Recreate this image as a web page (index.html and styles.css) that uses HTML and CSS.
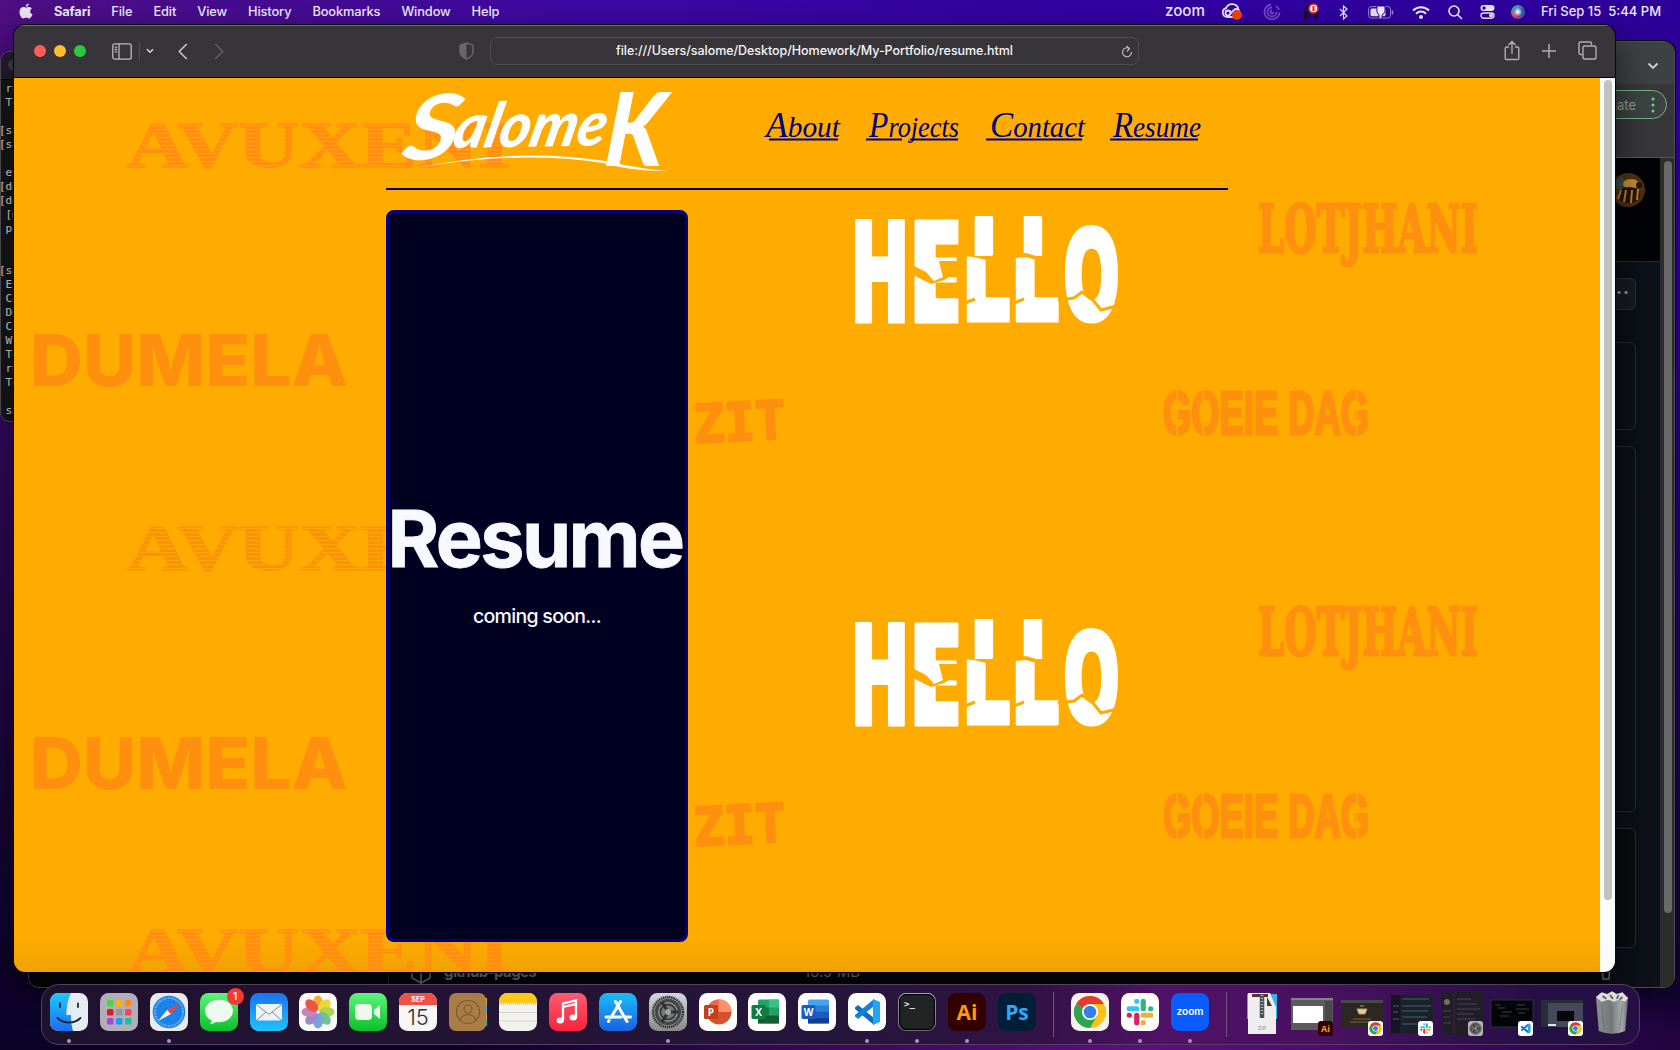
FILE: index.html
```html
<!DOCTYPE html>
<html lang="en">
<head>
<meta charset="utf-8">
<title>Desktop</title>
<link rel="stylesheet" href="styles.css">
</head>
<body>
<svg class="defs" aria-hidden="true">
  <defs>
    <linearGradient id="g-green" x2="0" y2="1"><stop stop-color="#5ff57a"/><stop offset="1" stop-color="#0bbf2a"/></linearGradient>
    <linearGradient id="g-blue" x2="0" y2="1"><stop stop-color="#1a72f2"/><stop offset="1" stop-color="#1fc3fb"/></linearGradient>
    <linearGradient id="g-store" x2="0" y2="1"><stop stop-color="#19bdf8"/><stop offset="1" stop-color="#1a62e4"/></linearGradient>
    <linearGradient id="g-red" x2="0" y2="1"><stop stop-color="#fb5c74"/><stop offset="1" stop-color="#fa233b"/></linearGradient>
    <linearGradient id="g-face" x2="0" y2="1"><stop stop-color="#1fc8fd"/><stop offset="1" stop-color="#1b6df2"/></linearGradient>
    <linearGradient id="g-gray" x2="0" y2="1"><stop stop-color="#cfd9e0"/><stop offset="1" stop-color="#8b8985"/></linearGradient>
    <linearGradient id="g-can"><stop stop-color="#8b8f92"/><stop offset=".45" stop-color="#75797c"/><stop offset=".8" stop-color="#a5a9ab"/><stop offset="1" stop-color="#6c7073"/></linearGradient>
    <pattern id="hatch" width="8" height="4" patternUnits="userSpaceOnUse"><rect width="8" height="3" fill="#ff900f"/></pattern>
    <clipPath id="upper"><path d="M930 120h130v54l-6-1-10 5h-22l-10-3-14 2-11-4-10 5h-22l-25-2z"/></clipPath>
    <clipPath id="lower"><path d="M930 177l30 2 12 3 20-1 20-2 10 3 20-1 20 0v80H930z"/></clipPath>
    <symbol id="chrome" viewBox="0 0 34 34">
      <circle cx="17" cy="17" r="16" fill="#fbc116"/>
      <path d="M17 17 3.1 9A16 16 0 0 1 30.9 9z" fill="#e33b2e"/>
      <path d="M17 17 3.1 9A16 16 0 0 0 17 33l7-12z" fill="#2da44e"/>
      <path d="M17 9h13.9A16 16 0 0 1 17 33l7-12z" fill="#fbc116"/>
      <circle cx="17" cy="17" r="8" fill="#fff"/><circle cx="17" cy="17" r="6.3" fill="#3380ec"/>
    </symbol>
    <symbol id="slack" viewBox="0 0 26 26">
      <g stroke-width="4.8" stroke-linecap="round" fill="none">
        <path d="M10 3v.1M3 10h7" stroke="#36c5f0"/><path d="M16 3v7M23 10h-.1" stroke="#2eb67d"/>
        <path d="M16 16h7M16 23v-.1" stroke="#ecb22e"/><path d="M10 16v7M3 16h.1" stroke="#e01e5a"/>
      </g>
    </symbol>
    <symbol id="code" viewBox="0 0 28 28">
      <path d="M2 9.5 5 7l16 13v7L2 11z" fill="#0b6fc0"/><path d="M2 18.5 5 21 21 8V1L2 17z" fill="#1482d4"/>
      <path d="M20 1l7 3v20l-7 3z" fill="#25a4ef"/>
    </symbol>
    <symbol id="gear" viewBox="0 0 34 34">
      <circle cx="17" cy="17" r="15" fill="#8c8d8c" stroke="#343536" stroke-width="2.5" stroke-dasharray="1.4 .7"/>
      <circle cx="17" cy="17" r="11.5" fill="none" stroke="#444546" stroke-width="3"/>
      <circle cx="17" cy="17" r="7.6" fill="#77797a" stroke="#2f3031" stroke-width="1.5"/>
      <path d="M17 17h11M17 17l-6-10M17 17l-6 10" stroke="#2f3031" stroke-width="3"/>
      <circle cx="17" cy="17" r="3" fill="#a1a3a2"/>
    </symbol>
    <symbol id="tile" viewBox="0 0 1586 403" overflow="visible">
      <text class="avuxeni" x="113" y="89" textLength="384" lengthAdjust="spacingAndGlyphs">AVUXENI</text>
      <text class="dumela" x="16" y="308" textLength="318" lengthAdjust="spacingAndGlyphs">DUMELA</text>
      <text class="zit" x="680" y="363" textLength="92" lengthAdjust="spacingAndGlyphs" transform="rotate(-3 720 350)">ZIT</text>
      <text class="lotjhani" x="1244" y="174" textLength="220" lengthAdjust="spacingAndGlyphs">LOTJHANI</text>
      <text class="goeie" x="1149" y="356" textLength="206" lengthAdjust="spacingAndGlyphs">GOEIE DAG</text>
      <path class="stencil" d="M1163 306v54M1189 306v54M1343 306v54"/>
      <g class="hello">
        <text x="836" y="244" textLength="60" lengthAdjust="spacingAndGlyphs">H</text>
        <text x="894" y="244" textLength="54" lengthAdjust="spacingAndGlyphs">E</text>
        <g clip-path="url(#upper)">
          <text x="955" y="241" textLength="50" lengthAdjust="spacingAndGlyphs">L</text>
          <text x="1004" y="241" textLength="50" lengthAdjust="spacingAndGlyphs">L</text>
        </g>
        <g clip-path="url(#lower)">
          <text x="947" y="243" textLength="51" lengthAdjust="spacingAndGlyphs">L</text>
          <text x="996" y="243" textLength="51" lengthAdjust="spacingAndGlyphs">L</text>
        </g>
        <text class="o" x="1048" y="243" textLength="59" lengthAdjust="spacingAndGlyphs">O</text>
      </g>
      <path class="gap" d="M896 186l16 8 8 9 9-4-4-16h24v17l-14-1-5 3-13 4-20-10z"/>
      <path class="crack" d="M1044 222l16-2 8-6 11 8 8 10 16-4 6 5M951 225l10-4M1000 225l10-4"/>
      <path class="gap" d="M1048 236l14 3 4 4-5 3h-14zM1095 240l14-3v10h-14zM870 138l4 2-1 8-4-6z"/>
    </symbol>
  </defs>
</svg>

<div class="desktop">
  <section class="terminal">
    <div class="terminal-bar"><i></i></div>
<pre> ro
 To

[sa
[sa

 ev
[de
[de
 [m
 po


[sa
 En
 Co
 De
 Co
 Wr
 To
 re
 To

 sa</pre>
  </section>

  <section class="chrome-win">
    <div class="tabstrip"><svg width="12" height="8" viewBox="0 0 12 8"><path d="M1.5 1.5 6 6l4.500-4.500" fill="none" stroke="#d0d0d0" stroke-width="1.800"/></svg></div>
    <div class="chrome-tools"><div class="update"><span>Update</span><svg width="4" height="16"><g fill="#80c990"><circle cx="2" cy="2" r="1.500"/><circle cx="2" cy="8" r="1.500"/><circle cx="2" cy="14" r="1.500"/></g></svg></div></div>
    <div class="chrome-body">
      <div class="repo">
        <div class="repo-head">
          <svg width="34" height="34" viewBox="0 0 34 34"><circle cx="17" cy="17" r="17" fill="#4f3010"/><path d="M1 11l9-8 6 5-6 10z" fill="#3d4a48"/><ellipse cx="20" cy="11" rx="8" ry="5" fill="#c48a2e"/><ellipse cx="18" cy="22" rx="11" ry="8" fill="#211409"/><path d="M10 17l-3 9M15 17l-2 12M21 17l-1 13M27 16l-1 11" stroke="#c07f28" stroke-width="2"/><circle cx="28" cy="12" r="3" fill="#211409"/></svg>
        </div>
        <div class="repo-more">···</div>
        <div class="box b1"></div><div class="box b2"></div><div class="box b3"></div>
        <div class="repo-row">
          <svg width="22" height="24" viewBox="0 0 22 24"><path d="M2 5v13l9 5 9-5V5M11 9v14" fill="none" stroke="#70767d" stroke-width="1.800"/></svg>
          <b>github-pages</b><span>16.9 MB</span>
          <svg class="bin" width="12" height="18"><path d="M2 0l1 16h6l1-16" fill="none" stroke="#70767d" stroke-width="1.500"/></svg>
        </div>
      </div>
      <div class="track"><i></i></div>
    </div>
  </section>

  <header class="menubar">
    <svg class="apple" width="14" height="17" viewBox="0 0 14 17"><path d="M9.700.500c.2 1.800-1.200 3.200-2.900 3.300C6.600 2.200 8 .700 9.700.500zM7 4.800c.8 0 1.600-.700 3-.700 1.200 0 2.200.600 2.900 1.500-2.500 1.500-2 4.800.6 5.800C12.700 13.500 11.400 15.500 10 15.500c-1.100 0-1.500-.700-2.800-.7s-1.700.7-2.800.7C2.500 15.500.5 12 .5 9c0-3 1.900-4.900 4-4.900 1.100 0 1.900.7 2.500.7z"/></svg>
    <nav><b>Safari</b><span>File</span><span>Edit</span><span>View</span><span>History</span><span>Bookmarks</span><span>Window</span><span>Help</span></nav>
    <div class="status">
      <svg class="zoomword" width="40" height="16"><text x="0" y="12" textLength="40" lengthAdjust="spacingAndGlyphs">zoom</text></svg>
      <span class="w40"><svg width="22" height="18" viewBox="0 0 22 18"><g fill="none" stroke="#e8e0f6" stroke-width="1.800"><path d="M15 14H6a4.500 4.500 0 0 1-1-8.800A6.500 6.500 0 0 1 17.500 7"/><circle cx="7" cy="10" r="2.500"/><path d="M9 11l4-4a3 3 0 0 1 5 3"/></g><circle cx="16" cy="12" r="5" fill="#f0440c"/></svg></span>
      <span class="w40"><svg width="18" height="18" viewBox="0 0 18 18" fill="none" stroke="#7448c3" stroke-width="1.800"><path d="M8 1.500a7.500 7.500 0 1 0 8.500 8M9 4.500A4.500 4.500 0 1 0 13.500 9M9 7.500a1.500 1.500 0 1 0 1.500 1.500M13 3a7 7 0 0 1 3 4"/></svg></span>
      <span class="w38"><svg width="18" height="18" viewBox="0 0 18 18"><path d="M3 13V8a6 6 0 0 1 12 0v5" fill="none" stroke="#171024" stroke-width="2"/><rect x="2" y="9" width="5" height="7" rx="2" fill="#171024"/><rect x="12" y="9" width="4" height="7" rx="2" fill="#171024"/><circle cx="11.500" cy="5.500" r="4.500" fill="#f5eef0" stroke="#df2820" stroke-width="1.500"/><path d="M11.500 3v5" stroke="#df2820" stroke-width="2"/></svg></span>
      <span class="w28"><svg width="10" height="15" viewBox="0 0 10 15"><path d="M1 4l7 7-3.500 3V1L8 4 1 11" fill="none" stroke="#e8e0f6" stroke-width="1.200"/></svg></span>
      <span class="w46"><svg width="26" height="13" viewBox="0 0 26 13"><rect x=".6" y=".6" width="22" height="11.500" rx="3" fill="none" stroke="#9d87d2"/><rect x="2.500" y="2.500" width="15" height="7.800" rx="1.500" fill="#e8e0f6"/><path d="M9 0v6l2 3v4h3V9l3-3V0z" fill="#f5f1ff" stroke="#3200a0"/><path d="M24.500 4.500v4" stroke="#9d87d2" stroke-width="1.500"/></svg></span>
      <span class="w34"><svg width="18" height="13" viewBox="0 0 18 13" fill="none" stroke="#f0eaff" stroke-width="2"><path d="M1 4.500a11.500 11.500 0 0 1 16 0M4 7.700a7 7 0 0 1 10 0"/><circle cx="9" cy="11" r="1" fill="#f0eaff"/></svg></span>
      <span class="w34"><svg width="15" height="15" viewBox="0 0 15 15" fill="none" stroke="#f0eaff" stroke-width="1.600"><circle cx="6" cy="6" r="5"/><path d="M9.700 9.700 14 14"/></svg></span>
      <span class="w30"><svg width="15" height="14" viewBox="0 0 15 14"><rect x=".5" y="0" width="14" height="6" rx="3" fill="#eae3f8"/><circle cx="4" cy="3" r="1.700" fill="#3200a0"/><rect x="1" y="8" width="13" height="5.200" rx="2.600" fill="none" stroke="#eae3f8" stroke-width="1.400"/><circle cx="11" cy="10.600" r="2" fill="#eae3f8"/></svg></span>
      <span class="w32"><i class="siri"></i></span>
      <svg class="clock" width="121" height="18"><text x="0" y="13" textLength="120">Fri Sep 15&#160; 5:44 PM</text></svg>
    </div>
  </header>

  <section class="safari">
    <div class="toolbar">
      <div class="lights"><i class="red"></i><i class="yellow"></i><i class="green"></i></div>
      <svg class="side" width="20" height="17" viewBox="0 0 20 17" fill="none" stroke="#bdbbbf" stroke-width="1.300"><rect x=".8" y=".8" width="18.400" height="15.400" rx="2"/><path d="M7 1v15M2.700 4.200h2.500M2.700 6.500h2.500M2.700 8.800h2.500"/></svg>
      <i class="divider"></i>
      <svg class="chev" width="8" height="6" viewBox="0 0 8 6"><path d="M1 1.200l3 3 3-3" fill="none" stroke="#d8d6da" stroke-width="1.600"/></svg>
      <svg class="back" width="10" height="17" viewBox="0 0 10 17"><path d="M8.800 1 1.300 8.500 8.800 16" fill="none" stroke="#c3c1c5" stroke-width="1.700"/></svg>
      <svg class="fwd" width="10" height="17" viewBox="0 0 10 17"><path d="M1.200 1l7.500 7.500L1.200 16" fill="none" stroke="#5f5d62" stroke-width="1.700"/></svg>
      <svg class="shield" width="15" height="18" viewBox="0 0 15 18"><path d="M7.500 1 14 3.200V10c0 3-3 5.500-6.500 7C4 15.500 1 13 1 10V3.200z" fill="none" stroke="#69676b" stroke-width="1.400"/><path d="M7.500 1v16C4 15.500 1 13 1 10V3.200z" fill="#69676b"/></svg>
      <div class="url">
        <svg width="398" height="18"><text x="0" y="13" textLength="397">file:///Users/salome/Desktop/Homework/My-Portfolio/resume.html</text></svg>
        <svg class="reload" width="12" height="13" viewBox="0 0 12 13" fill="none" stroke="#bdbbbf" stroke-width="1.200"><path d="M8.500 3.500A4.500 4.500 0 1 0 10.500 7M5.500 1l3 2.500L6 6.500"/></svg>
      </div>
      <div class="actions">
        <svg width="16" height="21" viewBox="0 0 16 21" fill="none" stroke="#b0aeb2" stroke-width="1.400"><path d="M5 7H2.500A1.300 1.300 0 0 0 1.200 8.300v9.900a1.300 1.300 0 0 0 1.300 1.300h11a1.300 1.300 0 0 0 1.300-1.300V8.300A1.300 1.300 0 0 0 13.500 7H11M8 14V1.500M4.500 5 8 1.500 11.500 5"/></svg>
        <svg width="14" height="14" viewBox="0 0 14 14" stroke="#b0aeb2" stroke-width="1.500"><path d="M7 0v14M0 7h14"/></svg>
        <svg width="19" height="19" viewBox="0 0 19 19" fill="none" stroke="#b0aeb2" stroke-width="1.400"><path d="M4.500 13.500h-2a1.500 1.500 0 0 1-1.500-1.500V2.500A1.500 1.500 0 0 1 2.500 1H12a1.500 1.500 0 0 1 1.500 1.500v2"/><rect x="5" y="5" width="13" height="13" rx="1.800"/></svg>
      </div>
    </div>
    <div class="viewport">
      <div class="page">
        <svg class="backdrop" width="1586" height="894" viewBox="0 0 1586 894" aria-hidden="true">
          <use href="#tile" width="1586" height="403"/><use href="#tile" y="403" width="1586" height="403"/><use href="#tile" y="806" width="1586" height="403"/>
        </svg>
        <main>
          <div class="site-head">
            <svg class="logo" width="300" height="90" viewBox="0 0 300 90">
              <text class="s" transform="translate(14 71) rotate(-4) skewX(-14)" textLength="56" lengthAdjust="spacingAndGlyphs">S</text>
              <text class="alome" transform="translate(65 58) rotate(-1) skewX(-14)" textLength="152" lengthAdjust="spacingAndGlyphs">alome</text>
              <text class="k" transform="translate(217 76) skewX(-5)" textLength="59" lengthAdjust="spacingAndGlyphs">K</text>
              <path d="M30 78Q130 57 220 71 255 79 281 81 250 82 217 73 130 60 30 78z"/>
            </svg>
            <nav class="links">
              <a><svg width="72" height="50"><text x="0" y="34" textLength="74" lengthAdjust="spacingAndGlyphs"><tspan>A</tspan>bout</text><path d="M3 36.500h69"/></svg></a>
              <a><svg width="92" height="50"><text x="3" y="34" textLength="90" lengthAdjust="spacingAndGlyphs"><tspan>P</tspan>rojects</text><path d="M0 36.500h36M44 36.500h48"/></svg></a>
              <a><svg width="96" height="50"><text x="4" y="34" textLength="95" lengthAdjust="spacingAndGlyphs"><tspan>C</tspan>ontact</text><path d="M0 36.500h96"/></svg></a>
              <a><svg width="88" height="50"><text x="3" y="34" textLength="88" lengthAdjust="spacingAndGlyphs"><tspan>R</tspan>esume</text><path d="M0 36.500h88"/></svg></a>
            </nav>
          </div>
          <article class="card"><h1>Resume</h1><p>coming soon...</p></article>
        </main>
      </div>
      <div class="scroll"><i></i></div>
    </div>
  </section>

  <footer class="dock">
    <div class="slot on"><svg viewBox="0 0 38 38"><rect width="38" height="38" rx="8.500" fill="#e5ebf3"/><path d="M8.500 0H21c-3 6-4.500 13-4.700 22H21c0 6 .6 11 2 16H8.500A8.500 8.500 0 0 1 0 29.500v-21A8.500 8.500 0 0 1 8.500 0z" fill="url(#g-face)"/><path d="M10 10.500v3.500M28 10.500v3.500M7.500 25c6 6 17 6 23 0" fill="none" stroke="#192535" stroke-width="1.800" stroke-linecap="round"/></svg></div>
    <div class="slot"><svg viewBox="0 0 38 38"><rect width="38" height="38" rx="8.500" fill="#b1aebc"/><g><rect x="7" y="7" width="6.500" height="6.500" rx="1.500" fill="#46d835"/><rect x="16" y="7" width="6.500" height="6.500" rx="1.500" fill="#ffb300"/><rect x="25" y="7" width="6.500" height="6.500" rx="1.500" fill="#ff8a15"/><rect x="7" y="16" width="6.500" height="6.500" rx="1.500" fill="#dc1b22"/><rect x="16" y="16" width="6.500" height="6.500" rx="1.500" fill="#91979e"/><rect x="25" y="16" width="6.500" height="6.500" rx="1.500" fill="#fb415c"/><rect x="7" y="25" width="6.500" height="6.500" rx="1.500" fill="#a843d5"/><rect x="16" y="25" width="6.500" height="6.500" rx="1.500" fill="#169bf5"/><rect x="25" y="25" width="6.500" height="6.500" rx="1.500" fill="#21bf9c"/></g></svg></div>
    <div class="slot on"><svg viewBox="0 0 38 38"><rect width="38" height="38" rx="8.500" fill="#e9eaeb"/><circle cx="19" cy="19" r="16.300" fill="#1b82e8"/><circle cx="19" cy="19" r="14" fill="none" stroke="#b9dcfa" stroke-width="2" stroke-dasharray=".6 1.250"/><path d="M31 10 21 21l-4-4z" fill="#ef4238"/><path d="M8 28l9-11 4 4z" fill="#f4f6f8"/></svg></div>
    <div class="slot"><svg viewBox="0 0 38 38"><rect width="38" height="38" rx="8.500" fill="url(#g-green)"/><ellipse cx="19" cy="18" rx="14" ry="11.300" fill="#eef9ef"/><path d="M12 26c0 2-1 4-2 5 3 0 5-1 7-3z" fill="#eef9ef"/></svg><em>1</em></div>
    <div class="slot"><svg viewBox="0 0 38 38"><rect width="38" height="38" rx="8.500" fill="url(#g-blue)"/><rect x="6" y="11" width="26" height="16.500" rx="2" fill="#f0f3f6"/><path d="M7 12l12 9.500L31 12M7 27l9-8M31 27l-9-8" fill="none" stroke="#7d8b98" stroke-width="1"/></svg></div>
    <div class="slot"><svg viewBox="0 0 38 38"><rect width="38" height="38" rx="8.500" fill="#fbfbfb"/><g opacity=".88"><ellipse cx="19" cy="10" rx="5" ry="7.500" fill="#f9a11b"/><ellipse cx="19" cy="10" rx="5" ry="7.500" fill="#e5d718" transform="rotate(45 19 19)"/><ellipse cx="19" cy="10" rx="5" ry="7.500" fill="#a6ce39" transform="rotate(90 19 19)"/><ellipse cx="19" cy="10" rx="5" ry="7.500" fill="#61b987" transform="rotate(135 19 19)"/><ellipse cx="19" cy="10" rx="5" ry="7.500" fill="#6699d3" transform="rotate(180 19 19)"/><ellipse cx="19" cy="10" rx="5" ry="7.500" fill="#907cc5" transform="rotate(225 19 19)"/><ellipse cx="19" cy="10" rx="5" ry="7.500" fill="#c176ae" transform="rotate(270 19 19)"/><ellipse cx="19" cy="10" rx="5" ry="7.500" fill="#ee3d2e" transform="rotate(315 19 19)"/></g></svg></div>
    <div class="slot"><svg viewBox="0 0 38 38"><rect width="38" height="38" rx="8.500" fill="url(#g-green)"/><rect x="6" y="11" width="17" height="16" rx="4" fill="#eef8ef"/><path d="M25 17l6-5v14l-6-5z" fill="#eef8ef"/></svg></div>
    <div class="slot"><svg viewBox="0 0 38 38"><rect width="38" height="38" rx="8.500" fill="#f7f6f5"/><path d="M0 12V8.500A8.500 8.500 0 0 1 8.500 0h21A8.500 8.500 0 0 1 38 8.500V12z" fill="#ef5148"/><text x="19" y="9" class="sep">SEP</text><text x="19" y="31.500" class="day">15</text></svg></div>
    <div class="slot"><svg viewBox="0 0 38 38"><path d="M34 5h4v8h-4z" fill="#d8a43d"/><path d="M34 13h4v8h-4z" fill="#45a4df"/><path d="M34 21h4v6h-4z" fill="#f19132"/><path d="M34 27h4v6h-4z" fill="#31bf6a"/><rect width="37" height="38" rx="7" fill="#a97c48"/><g fill="none" stroke="#80592d" stroke-width="1.200"><circle cx="19" cy="19" r="11.500"/><circle cx="19" cy="16" r="4"/><path d="M11.500 27c1-7 14-7 15 0"/></g></svg></div>
    <div class="slot"><svg viewBox="0 0 38 38"><rect width="38" height="38" rx="8.500" fill="#f4f2ef"/><path d="M0 10V8.500A8.500 8.500 0 0 1 8.500 0h21A8.500 8.500 0 0 1 38 8.500V10z" fill="#fdca17"/><path d="M0 11h38" stroke="#a69d85" stroke-dasharray="1 1"/><path d="M0 19.500h38M0 28h38" stroke="#d5d2ce"/></svg></div>
    <div class="slot"><svg viewBox="0 0 38 38"><rect width="38" height="38" rx="8.500" fill="url(#g-red)"/><path d="M14 27V10.500l13-3V24M14 14l13-3" fill="none" stroke="#fff" stroke-width="2.300"/><ellipse cx="11.300" cy="27.500" rx="3.700" ry="3" fill="#fff"/><ellipse cx="24.300" cy="24.500" rx="3.700" ry="3" fill="#fff"/></svg></div>
    <div class="slot"><svg viewBox="0 0 38 38"><rect width="38" height="38" rx="8.500" fill="url(#g-store)"/><path d="M21.500 8.500 12 24.500M16.500 8.500 28 28.500M7 24h15M27 24h4.500M9.500 28.500l.5-1" fill="none" stroke="#fff" stroke-width="3" stroke-linecap="round"/></svg></div>
    <div class="slot on"><svg viewBox="0 0 38 38"><rect width="38" height="38" rx="8.500" fill="url(#g-gray)"/><use href="#gear" x="2" y="2" width="34" height="34"/></svg></div>
    <div class="slot"><svg viewBox="0 0 38 38"><rect width="38" height="38" rx="8.500" fill="#fff"/><circle cx="20" cy="19" r="12.500" fill="#d35230"/><path d="M20 6.500A12.500 12.500 0 0 1 32.500 19H20z" fill="#ff8f6b"/><path d="M20 6.500V19H7.500A12.500 12.500 0 0 1 20 6.500z" fill="#ed6c47"/><rect x="5" y="12" width="14" height="14" rx="1.500" fill="#c43e1c"/><text x="12" y="23" class="office">P</text></svg></div>
    <div class="slot"><svg viewBox="0 0 38 38"><rect width="38" height="38" rx="8.500" fill="#fff"/><rect x="10" y="6.500" width="21" height="24" rx="1.500" fill="#21a366"/><path d="M21 6.500h10v8H21z" fill="#33c481"/><path d="M10 22.500h21v8H10z" fill="#185c37"/><path d="M10 14.500h11v8H10z" fill="#107c41"/><rect x="3.500" y="12" width="14" height="14" rx="1.500" fill="#107c41"/><text x="10.500" y="23" class="office">X</text></svg></div>
    <div class="slot"><svg viewBox="0 0 38 38"><rect width="38" height="38" rx="8.500" fill="#fff"/><rect x="10" y="6.500" width="21" height="24" rx="1.500" fill="#41a5ee"/><path d="M10 12.500h21v6H10z" fill="#2b7cd3"/><path d="M10 18.500h21v6H10z" fill="#185abd"/><path d="M10 24.500h21v6H10z" fill="#103f91"/><rect x="3.500" y="12" width="14" height="14" rx="1.500" fill="#185abd"/><text x="10.500" y="22.500" class="office">W</text></svg></div>
    <div class="slot on"><svg viewBox="0 0 38 38"><rect width="38" height="38" rx="8.500" fill="#fff"/><use href="#code" x="5" y="5" width="28" height="28"/></svg></div>
    <div class="slot on"><svg viewBox="0 0 38 38"><rect width="38" height="38" rx="8.500" fill="url(#g-gray)"/><rect x="1.500" y="1.500" width="35" height="35" rx="7" fill="#222324" stroke="#050505" stroke-width="1.500"/><text x="6" y="14" class="prompt">&gt;_</text></svg></div>
    <div class="slot on"><svg viewBox="0 0 38 38"><rect width="38" height="38" rx="8.500" fill="#330000"/><text x="19" y="26.500" class="adobe" fill="#ff9a00">Ai</text></svg></div>
    <div class="slot"><svg viewBox="0 0 38 38"><rect width="38" height="38" rx="8.500" fill="#001e36"/><text x="19" y="26.500" class="adobe" fill="#31a8ff">Ps</text></svg></div>
    <div class="rule r1"></div>
    <div class="slot on"><svg viewBox="0 0 38 38"><rect width="38" height="38" rx="8.500" fill="#f4f3f2"/><use href="#chrome" x="2" y="2" width="34" height="34"/></svg></div>
    <div class="slot on"><svg viewBox="0 0 38 38"><rect width="38" height="38" rx="8.500" fill="#fff"/><use href="#slack" x="5" y="5" width="28" height="28"/></svg></div>
    <div class="slot on"><svg viewBox="0 0 38 38"><rect width="38" height="38" rx="8.500" fill="#0b5cff"/><text x="19" y="22" class="zm" textLength="27" lengthAdjust="spacingAndGlyphs">zoom</text></svg></div>
    <div class="rule r2"></div>
    <div class="slot"><svg class="wide" viewBox="0 0 44 44"><path d="M7 4h30v25H7z" fill="#35b2e6"/><path d="M8 3h22l6 14v27H8z" fill="#eeeeee"/><path d="M12 4h16v3H12zM27 7l5 9h-5z" fill="#50372a"/><path d="M22 4v24" stroke="#4d5155" stroke-width="4.500"/><path d="M22 5v20" stroke="#aab0b4" stroke-width="2.500" stroke-dasharray="1 2"/><text x="22" y="40" class="zip">ZIP</text></svg></div>
    <div class="slot"><svg class="wide" viewBox="0 0 44 44"><path d="M1 8h42v32H1z" fill="#5c5c5d"/><path d="M1 8h42v2H1z" fill="#858585"/><path d="M3 16h30v17H3z" fill="#fff"/><path d="M35 11h7v27h-7z" fill="#49494a"/><rect x="28" y="31" width="15" height="15" rx="3" fill="#330000"/><text x="35.500" y="42" class="ai-mini">Ai</text></svg></div>
    <div class="slot"><svg class="wide" viewBox="0 0 44 44"><path d="M1 10h42v27H1z" fill="#2d2722"/><path d="M1 10h42v3H1z" fill="#46494a"/><path d="M17 19h10l-2 5h-6zM20 16h4" fill="#e3cc9d" stroke="#ba9a62"/><path d="M13 29h18M10 32h24" stroke="#85652f"/><rect x="28" y="31" width="15" height="15" rx="3" fill="#fff"/><use href="#chrome" x="29" y="32" width="13" height="13"/></svg></div>
    <div class="slot"><svg class="wide" viewBox="0 0 44 44"><path d="M1 5h42v38H1z" fill="#1b222b"/><path d="M1 5h9v38H1z" fill="#171520"/><path d="M12 9h27M12 16h29M12 21h26M12 27h25M12 34h15M3 16h6M3 22h5M3 29h6" stroke="#49606b"/><rect x="28" y="31" width="15" height="15" rx="3" fill="#fff"/><use href="#slack" x="30" y="33" width="11" height="11"/></svg></div>
    <div class="slot"><svg class="wide" viewBox="0 0 44 44"><path d="M1 2h42v43H1z" fill="#211e29"/><path d="M14 3v40" stroke="#302d38"/><circle cx="7" cy="12" r="3" fill="#7f6961"/><path d="M17 9h14M17 14h20M17 19h23M17 24h16M17 29h18M3 21h8M3 27h7M3 33h8" stroke="#474451"/><rect x="28" y="31" width="15" height="15" rx="3" fill="#b5b5b4"/><use href="#gear" x="29" y="32" width="13" height="13"/></svg></div>
    <div class="slot"><svg class="wide" viewBox="0 0 44 44"><path d="M1 10h42v27H1z" fill="#030609" stroke="#26323c"/><path d="M5 15h5M8 18h7M12 22h10M10 26h9M27 15h8M26 19h13M28 23h7" stroke="#39413f"/><rect x="28" y="31" width="15" height="15" rx="3" fill="#fff"/><use href="#code" x="30" y="33" width="11" height="11"/></svg></div>
    <div class="slot"><svg class="wide" viewBox="0 0 44 44"><path d="M1 10h42v27H1z" fill="#45485a"/><path d="M1 10h42v3H1zM1 10h7v27H1z" fill="#272d32"/><path d="M17 21h17v10H17z" fill="#07080b"/><path d="M8 35h8" stroke="#dfe3e5" stroke-width="2"/><rect x="28" y="31" width="15" height="15" rx="3" fill="#fff"/><use href="#chrome" x="29" y="32" width="13" height="13"/></svg></div>
    <div class="slot"><svg class="trash" viewBox="4 0 36 50"><path d="M5 8h34l-3 36q-14 6-28 0z" fill="url(#g-can)"/><path d="M11 16l3 27M22 17v28M33 16l-3 27" stroke="#5d6164" opacity=".5"/><path d="M5 8l6-5 6 2 5-3 5 3 6-2 6 6-3 4-7-2-5 2-6-2-7 2z" fill="#dededc"/><path d="M12 7l4 3M20 6l3 4M29 6l-2 4M33 8l-3 3" stroke="#55695f" stroke-width="2"/></svg></div>
  </footer>
</div>
</body>
</html>
```
FILE: styles.css
```css
* { box-sizing: border-box; }
body { margin: 0; font-family: Inter, "Liberation Sans", sans-serif; }
svg { display: block; flex: none; }
.defs { position: absolute; width: 0; height: 0; }

.desktop {
  position: relative; width: 1680px; height: 1050px; overflow: hidden;
  background:
    radial-gradient(ellipse 700px 80px at 1150px 1050px, #64098c, transparent),
    linear-gradient(180deg, transparent 10%, #12042f 85%, #0c0228 100%),
    linear-gradient(90deg, #4b0d80, #2c0096);
}

/* menu bar */
.menubar {
  position: absolute; inset: 0 0 auto; height: 24px; padding: 0 18px 0 19px;
  display: flex; align-items: center;
  background: linear-gradient(90deg, #4d0f82, #3d08a4 35%, #3200a2 70%, #2d009b);
  color: #f1eafa; font-size: 13px; font-weight: 500;
}
.apple { fill: #ece4f3; margin: -2px 21px 0 0; }
.menubar nav { display: flex; letter-spacing: -.1px; font-size: 12.8px; line-height: 16px; margin-top: -1px; }
.menubar nav > * { margin-right: 21px; }
.menubar nav b { font-weight: 700; }
.status { display: flex; align-items: center; margin-left: auto; }
.status span { display: flex; justify-content: center; }
.zoomword { overflow: visible; margin-right: 7px; fill: #f1eafa; font: 500 15px Inter, sans-serif; }
.w40 { width: 40px; } .w38 { width: 38px; } .w28 { width: 28px; } .w46 { width: 46px; }
.w34 { width: 34px; } .w30 { width: 30px; } .w32 { width: 32px; }
.siri { width: 14px; height: 14px; border-radius: 50%; background: radial-gradient(circle, #fff 5%, transparent 45%), conic-gradient(#5b8cc0, #27618e, #3258c8, #b83b7c, #e0578a, #26a897, #5b8cc0); }
.clock { overflow: visible; margin: -1px 0 0 7px; fill: #f1eafa; font: 500 13px Inter, sans-serif; }

/* terminal behind the browser */
.terminal { position: absolute; left: 0; top: 51px; width: 200px; height: 371px; border: 1px solid #56515c; border-radius: 10px; background: #171717; overflow: hidden; }
.terminal-bar { height: 28px; background: #261d30; border-bottom: 1px solid #050505; padding: 7px; }
.terminal-bar i { display: block; width: 12px; height: 12px; border-radius: 50%; background: #46404b; }
.terminal pre { margin: 2px 0 0 -2px; font: 11px/14px "DejaVu Sans Mono", monospace; color: #e0e0e0; }

/* second browser */
.chrome-win { position: absolute; left: 28px; top: 41px; width: 1647px; height: 947px; border: 1px solid #4c4e50; border-radius: 11px; overflow: hidden; background: #0b0f14; display: flex; flex-direction: column; box-shadow: 0 0 0 1px #0b0316; }
.tabstrip { height: 42px; background: #3d4143; display: flex; align-items: center; justify-content: flex-end; padding: 6px 15px 0 0; }
.chrome-tools { height: 74px; background: #37373a; border-bottom: 1px solid #58585b; display: flex; justify-content: flex-end; padding: 6px 7px; }
.update { width: 100px; height: 29px; border: 1.500px solid #75b484; border-radius: 15px; background: #3c4340; display: flex; align-items: center; justify-content: flex-end; gap: 15px; padding-right: 11px; color: #969b9c; font-size: 13px; }
.chrome-body { flex: 1; display: flex; min-height: 0; }
.repo { flex: 1; display: flex; flex-direction: column; align-items: flex-end; padding-right: 24px; background: linear-gradient(90deg, #05070a 96%, #0b0e14 97%, #0e121a); }
.repo-head { align-self: stretch; flex: none; height: 104px; margin-right: -24px; background: #010306; border-bottom: 1px solid #272b30; display: flex; justify-content: flex-end; padding: 15px 15px 0; }
.repo-more { flex: none; width: 60px; height: 32px; margin: 16px 0 32px; border: 1px solid #292e34; border-radius: 6px; background: #171b21; color: #959b9f; font: bold 18px/28px Inter, sans-serif; letter-spacing: 1px; text-align: right; padding-right: 5px; }
.box { width: 400px; border: 1px solid #262b31; border-radius: 6px; margin-bottom: 16px; flex: none; }
.b1 { height: 88px; } .b2 { height: 366px; } .b3 { height: 120px; margin-bottom: 0; background: #090c10; }
.repo-row { align-self: stretch; flex: none; margin-right: -20px; margin-left: 359px; height: 43px; border-left: 1px solid #202429; display: flex; align-items: center; color: #85898e; font-size: 15px; padding-left: 21px; margin-top: 2px; }
.repo-row b { margin-left: 12px; width: 360px; letter-spacing: -.6px; }
.repo-row .bin { margin-left: auto; margin-right: 44px; }
.track { width: 14px; background: #2c2c2d; padding: 3px 2px 0 4px; }
.track i { display: block; height: 752px; border-radius: 4px; background: #6a6a6b; }

/* browser */
.safari { position: absolute; left: 14px; top: 25px; width: 1601px; height: 947px; border-radius: 11px; overflow: hidden; box-shadow: 0 0 0 1px #08060c, 0 14px 35px #0009; }
.toolbar { height: 53px; display: flex; align-items: center; padding: 0 18px 1px 20px; background: #38353a; border-top: 1px solid #6d6a70; border-bottom: 1px solid #000; }
.lights { display: flex; gap: 8px; margin-right: 26px; }
.lights i { width: 12px; height: 12px; border-radius: 50%; }
.red { background: #ff5f57; } .yellow { background: #febc2e; } .green { background: #28c840; }
.divider { width: 1px; height: 18px; background: #514e53; margin: 0 6px 0 7px; }
.back { margin: 0 26px 0 24px; }
.shield { margin-left: 235px; }
.url { width: 649px; height: 28px; margin-left: 16px; border: 1px solid #504d53; border-radius: 7px; display: flex; align-items: center; padding-left: 125px; color: #fff; }
.url text { fill: #f6f5f7; font: 500 12.500px Inter, sans-serif; }
.reload { margin-left: 107px; }
.actions { margin-left: auto; display: flex; gap: 22px; align-items: center; margin-top: -1px; }
.viewport { height: 894px; display: flex; }
.page { position: relative; width: 1586px; height: 894px; background: linear-gradient(#ffab00 96%, #f1a200); }
.backdrop { position: absolute; left: 0; top: 0; fill: #ff900f; }
.avuxeni { font: bold 65px "Liberation Serif", serif; fill: url(#hatch); stroke: #ff900f; stroke-width: .9; }
.dumela { font: 800 72px Inter, sans-serif; }
.zit { font: bold 53px "DejaVu Sans Mono", monospace; stroke: #ff900f; stroke-width: 2.500; stroke-linejoin: round; }
.lotjhani { font: bold 66px "DejaVu Serif", serif; stroke: #ff900f; stroke-width: 3; }
.goeie { font: bold 62px "Liberation Sans", sans-serif; stroke: #ff900f; stroke-width: 3; }
.stencil { fill: none; stroke: #ffab00; stroke-width: 1.500; }
.hello { font: 800 141px "Open Sans", "Liberation Sans", sans-serif; fill: #fff; stroke: #fff; stroke-width: 3; stroke-linejoin: round; }
.hello .o { font-size: 130px; }
.crack { fill: none; stroke: #ffab00; stroke-width: 3; }
.gap { fill: #ffab00; }
main { position: relative; width: 842px; margin-left: 372px; }
.site-head { height: 112px; border-bottom: 2px solid #000080; display: flex; align-items: flex-start; }
.logo { overflow: visible; margin-top: 12px; fill: #fff; font-family: Lato, sans-serif; font-weight: 700; font-style: italic; }
.logo .s { font-size: 88px; } .logo .alome { font-size: 62px; font-weight: 900; } .logo .k { font-size: 102px; font-weight: 900; }
.links { display: flex; gap: 28px; margin: 25px 0 0 80px; }
.links svg { overflow: visible; }
.links text { font: italic 29px "Liberation Serif", serif; fill: #000080; }
.links tspan { font-size: 35px; }
.links path { stroke: #000080; stroke-width: 2; }
.card { width: 302px; height: 732px; margin-top: 20px; border: 3px solid #000080; border-radius: 8px; background: #000020; color: #f8f8ff; display: flex; flex-direction: column; align-items: center; padding-top: 267px; }
h1 { margin: 0 0 0 -4px; font-size: 79px; line-height: 116px; font-weight: 700; letter-spacing: -2.6px; white-space: nowrap; -webkit-text-stroke: .8px #f8f8ff; }
.card p { margin: 8px 0 0; font-size: 19.500px; line-height: 24px; letter-spacing: -.7px; font-weight: 500; }
.scroll { width: 15px; background: #fafafa; padding: 2px 3px 0 4px; }
.scroll i { display: block; height: 820px; border-radius: 4px; background: #c1c1c1; }

/* dock */
.dock { position: absolute; left: 41px; top: 984px; width: 1599px; height: 61px; border: 1px solid #54405f; border-radius: 18px; display: flex; padding: 8px 0 0 2px; background: linear-gradient(90deg, #1f122d, #26153b 50%, #301344 62%, #501166 70%, #4a1160 80%, #241044 94%); }
.slot { position: relative; width: 49.900px; flex: none; display: flex; justify-content: center; align-items: flex-start; }
.slot svg { width: 38px; height: 38px; }
.slot .wide { width: 44px; height: 44px; margin-top: -3px; overflow: visible; }
.slot .trash { width: 34px; height: 48px; margin-top: -4px; }
.slot.on::after { content: ""; position: absolute; left: 50%; bottom: 1px; width: 4px; height: 4px; margin-left: -2px; border-radius: 50%; background: #ad8fc5; }
.slot em { position: absolute; right: 0; top: -5px; width: 17px; height: 17px; border-radius: 50%; background: #f03c34; color: #fff; font: 500 11px/17px Inter, sans-serif; text-align: center; }
.rule { width: 1px; height: 45px; background: #74537f; margin: -1px 11px 0 11px; flex: none; }
.rule.r2 { margin: -1px 10px 0 12px; }
.dock text { text-anchor: middle; font-family: "Open Sans", sans-serif; }
.dock .sep { font: bold 7px Inter, sans-serif; fill: #fff; }
.dock .day { font: 300 22px Inter, sans-serif; fill: #333; }
.dock .office { font-weight: 700; font-size: 10px; fill: #fff; }
.dock .prompt { text-anchor: start; font: bold 9px "DejaVu Sans Mono", monospace; fill: #eee; }
.dock .adobe { font-weight: 700; font-size: 21px; }
.dock .zm { font: 600 10px Inter, sans-serif; fill: #fff; }
.dock .zip { font-size: 6px; fill: #888; }
.dock .ai-mini { font-weight: 700; font-size: 9px; fill: #ff9a00; }
```
